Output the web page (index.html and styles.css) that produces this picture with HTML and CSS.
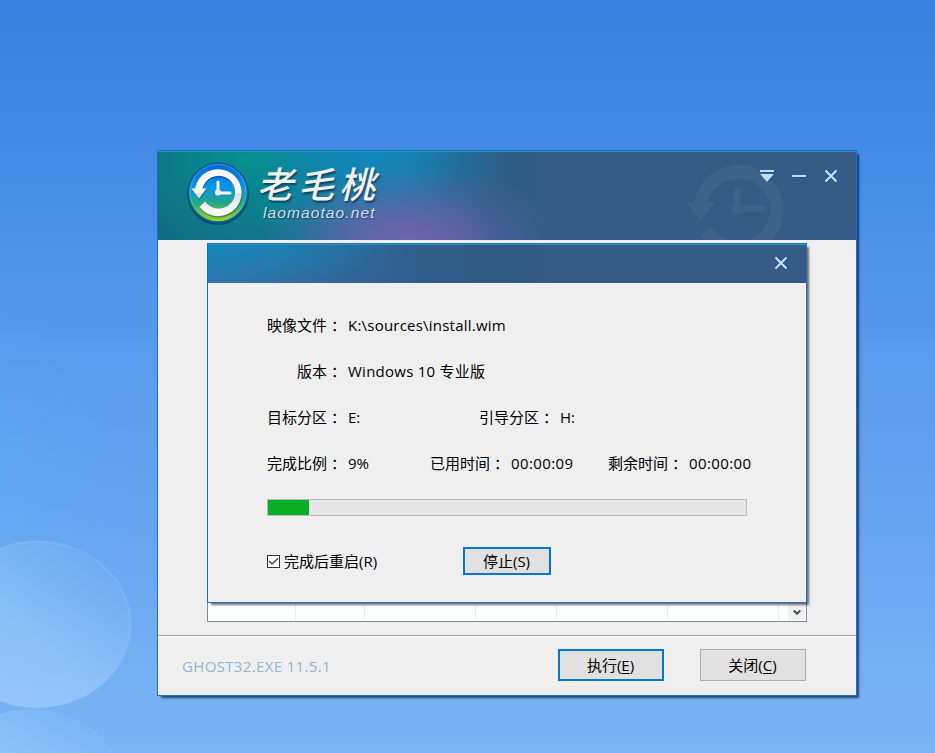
FILE: index.html
```html
<!DOCTYPE html>
<html lang="zh-CN">
<head>
<meta charset="utf-8">
<title>老毛桃</title>
<link rel="stylesheet" href="styles.css">
</head>
<body>
<svg class="bubbles" width="200" height="253" viewBox="0 0 200 253">
  <defs>
    <linearGradient id="bubble" x1="1" y1="0" x2="0" y2="1">
      <stop offset="0.15" stop-color="#bfe3ff" stop-opacity="0.05"/>
      <stop offset="0.55" stop-color="#bfe6ff" stop-opacity="0.34"/>
      <stop offset="1" stop-color="#c5e8ff" stop-opacity="0.38"/>
    </linearGradient>
  </defs>
  <ellipse cx="37" cy="124.500" rx="93.500" ry="83" fill="url(#bubble)" stroke="#a5d2ff" stroke-opacity="0.22" stroke-width="2"/>
  <ellipse cx="30" cy="293" rx="94" ry="83" fill="url(#bubble)" stroke="#a5d2ff" stroke-opacity="0.12" stroke-width="2"/>
</svg>

<main class="window">
  <header class="banner">
    <svg class="emblem" width="68" height="70" viewBox="0 0 68 70">
      <defs>
        <linearGradient id="disc" x1="0" y1="0" x2="0" y2="1">
          <stop offset="0" stop-color="#0563d8"/>
          <stop offset="0.42" stop-color="#0797e8"/>
          <stop offset="0.68" stop-color="#24a884"/>
          <stop offset="1" stop-color="#a5d900"/>
        </linearGradient>
        <linearGradient id="silver" x1="0" y1="0" x2="0" y2="1">
          <stop offset="0" stop-color="#ffffff"/>
          <stop offset="0.5" stop-color="#f8f8f8"/>
          <stop offset="0.51" stop-color="#dedede"/>
          <stop offset="1" stop-color="#ffffff"/>
        </linearGradient>
      </defs>
      <circle cx="34" cy="36" r="31" fill="#07385f" opacity="0.65"/>
      <circle cx="34" cy="34.500" r="29.500" fill="url(#disc)" stroke="#14609a" stroke-width="1.500"/>
      <circle cx="34" cy="34.500" r="28" fill="none" stroke="#8ee7e5" stroke-opacity="0.35"/>
      <path d="M11 30.500 A23.500 23.500 0 1 1 15.500 49 L21 43.500 A16.500 16.500 0 1 0 18.500 30.500 H22.500 L15 40.500 L7.300 30.500 Z" fill="#0a4385" opacity="0.5" transform="translate(0.500 1.500)"/>
      <path d="M11 30.500 A23.500 23.500 0 1 1 15.500 49 L21 43.500 A16.500 16.500 0 1 0 18.500 30.500 H22.500 L15 40.500 L7.300 30.500 Z" fill="url(#silver)"/>
      <path d="M34 24 V33 M35 35 H46" fill="none" stroke="#f4f4f4" stroke-width="3" stroke-linecap="round"/>
      <circle cx="34" cy="34.500" r="3" fill="#eee"/>
    </svg>
    <div class="brand">
      <span class="brand-name">老毛桃</span>
      <span class="brand-site">laomaotao.net</span>
    </div>
    <svg class="watermark" width="98" height="76" viewBox="0 0 98 76">
      <path d="M8 38 A45 45 0 1 1 15 71 L26 63 A31.500 31.500 0 1 0 22 38 H29 L15 56 L0 38 Z" fill="#3f628b"/>
      <path d="M51.500 27 V45 H77" fill="none" stroke="#3f628b" stroke-width="6" stroke-linecap="round"/>
      <circle cx="51.500" cy="45" r="5.500" fill="#3f628b"/>
    </svg>
    <svg class="controls" width="80" height="16" viewBox="0 0 80 16">
      <g fill="#0a4f97" opacity="0.6" transform="translate(1 1)">
        <path d="M1 2H15V4H1Z M1 6H15L8 14Z M33 7H47V9H33Z"/>
        <path d="M67 3L77 13M77 3L67 13" stroke="#0a5fb0" stroke-width="2.200"/>
      </g>
      <path d="M1 2H15V4H1Z M1 6H15L8 14Z M33 7H47V9H33Z" fill="#bfe0ff"/>
      <path d="M66.500 2.500L77.500 13.500M77.500 2.500L66.500 13.500" stroke="#c8e4ff" stroke-width="2"/>
    </svg>
  </header>

  <section class="content">
    <div class="list">
      <div class="cells"><i></i><i></i><i></i><i></i><i></i><i></i></div>
      <div class="scroll">
        <svg width="8" height="7" viewBox="0 0 8 7"><path d="M0.700 1.500L4 4.800L7.300 1.500" fill="none" stroke="#505050" stroke-width="2"/></svg>
      </div>
    </div>
  </section>

  <footer class="footer">
    <span class="version">GHOST32.EXE 11.5.1</span>
    <button class="button primary">执行(<u>E</u>)</button>
    <button class="button">关闭(<u>C</u>)</button>
  </footer>

  <section class="dialog">
    <header class="dialog-bar">
      <svg width="16" height="16" viewBox="0 0 16 16">
        <path d="M3.500 3.500L14.500 14.500M14.500 3.500L3.500 14.500" stroke="#0a5fb0" stroke-width="2" opacity="0.6"/>
        <path d="M2.500 2.500L13.500 13.500M13.500 2.500L2.500 13.500" stroke="#c8e4ff" stroke-width="2"/>
      </svg>
    </header>
    <div class="dialog-body">
      <div class="row">
        <div class="field"><span class="label">映像文件<b>：</b></span><span class="value path">K:\sources\install.wim</span></div>
      </div>
      <div class="row">
        <div class="field"><span class="label">版本<b>：</b></span><span class="value os">Windows 10 专业版</span></div>
      </div>
      <div class="row">
        <div class="field target"><span class="label">目标分区<b>：</b></span><span class="value">E:</span></div>
        <div class="field"><span class="label">引导分区<b>：</b></span><span class="value">H:</span></div>
      </div>
      <div class="row">
        <div class="field percent"><span class="label">完成比例<b>：</b></span><span class="value">9%</span></div>
        <div class="field elapsed"><span class="label">已用时间<b>：</b></span><span class="value time">00:00:09</span></div>
        <div class="field"><span class="label">剩余时间<b>：</b></span><span class="value time">00:00:00</span></div>
      </div>
      <div class="progress"><div class="progress-fill"></div></div>
      <div class="actions">
        <label class="check">
          <svg width="13" height="13" viewBox="0 0 13 13"><rect x="0.500" y="0.500" width="12" height="12" fill="#fff" stroke="#333"/><path d="M2 6L5 9L11 3.200" fill="none" stroke="#444" stroke-width="1.300"/></svg>
          <span>完成后重启(R)</span>
        </label>
        <button class="button primary stop">停止(S)</button>
      </div>
    </div>
  </section>
</main>
</body>
</html>
```

FILE: styles.css
```css
* { box-sizing: border-box; }

body {
  margin: 0;
  width: 935px;
  height: 753px;
  overflow: hidden;
  position: relative;
  background:
    radial-gradient(circle at -40px 480px, rgba(90, 180, 245, 0.4), rgba(90, 180, 245, 0) 180px),
    linear-gradient(#3a80e0 0, #468ee8 190px, #589aeb 350px, #6ba7f0 560px, #7cb5f6 753px);
  font: 15px/20px "Open Sans", "Noto Sans CJK SC", sans-serif;
  color: #000;
}

.bubbles { position: absolute; left: 0; top: 500px; }

.window {
  position: absolute;
  left: 157px;
  top: 150px;
  width: 700px;
  height: 546px;
  display: flex;
  flex-direction: column;
  background: #efefef;
  border: 1px solid #1670cd;
  box-shadow: 3px 3px 2px -1px rgba(0, 15, 40, 0.65);
}

.banner {
  height: 89px;
  flex: none;
  position: relative;
  display: flex;
  border-top: 1px solid #2b93a3;
  background:
    radial-gradient(ellipse 150px 80px at 250px 92px, #7363a9 0, rgba(112, 98, 168, 0.8) 30%, rgba(105, 98, 165, 0.3) 70%, rgba(100, 98, 160, 0) 100%),
    radial-gradient(ellipse 130px 120px at 216px 0, #1187ba 0, rgba(17, 135, 186, 0.75) 35%, rgba(17, 135, 186, 0.2) 75%, rgba(17, 135, 186, 0) 100%),
    radial-gradient(ellipse 150px 90px at 88px 8px, #068f8f, rgba(6, 143, 143, 0)),
    linear-gradient(90deg, #116982 0, #137590 130px, #2a638d 290px, #2d5c87 350px, #345a85 400px);
}

.emblem { margin: 6px 0 0 26px; }

.brand {
  display: flex;
  flex-direction: column;
  margin: 13px 0 0 5px;
}

.brand-name {
  font-family: "Noto Sans CJK SC", sans-serif;
  font-size: 36px;
  font-style: italic;
  font-weight: 500;
  line-height: 34px;
  letter-spacing: 5px;
  color: #f1f1f1;
  text-shadow: 1px 2px 2px rgba(0, 35, 60, 0.65);
}

.brand-site {
  margin: 6px 0 0 6px;
  font-family: "Liberation Sans", sans-serif;
  font-size: 15.5px;
  font-style: italic;
  line-height: 16px;
  letter-spacing: 1.1px;
  color: #cfdff0;
  text-shadow: 1px 1px 1px rgba(0, 35, 60, 0.5);
}

.watermark { position: absolute; left: 528px; top: 12px; }
.controls { position: absolute; left: 601px; top: 16px; }

.content { flex: 1; padding: 0 49px; display: flex; align-items: flex-end; }

.list {
  flex: 1;
  height: 370px;
  margin-bottom: 13px;
  display: flex;
  justify-content: space-between;
  background: #fff;
  border: 1px solid #828790;
}

.cells { display: grid; grid-template-columns: 88px 69px 111px 81px 111px 111px; height: 367px; }
.cells i { border-right: 1px solid #ececf0; }

.scroll {
  width: 17px;
  margin: 1px 1px 1px 0;
  display: flex;
  align-items: flex-end;
  justify-content: center;
  padding-bottom: 4px;
  background: #f0f0f0;
}

.footer {
  height: 60px;
  flex: none;
  display: flex;
  align-items: flex-start;
  padding: 12px 50px 0 24px;
  border-top: 1px solid #a0a0a0;
  box-shadow: inset 0 1px #fff;
}

.version { flex: 1; margin-top: 8px; color: #94b4d3; letter-spacing: 0.35px; }

.button {
  width: 106px;
  height: 32px;
  margin: 1px 0 0 36px;
  padding: 0 1px 1px 0;
  background: #e1e1e1;
  border: 1px solid #adadad;
  font: inherit;
  color: inherit;
}

.button.primary { border: 2px solid #0078d7; }
.button u { text-underline-offset: 2px; text-decoration-thickness: 1px; }

.dialog {
  position: absolute;
  left: 49px;
  top: 92px;
  width: 600px;
  height: 360px;
  display: flex;
  flex-direction: column;
  background: #efefef;
  border: 1px solid #1670cd;
  box-shadow: 3px 3px 2px -1px rgba(0, 0, 0, 0.55);
}

.dialog-bar {
  height: 39px;
  flex: none;
  display: flex;
  justify-content: flex-end;
  padding: 10px 17px 0 0;
  border-top: 1px solid #2b93b3;
  background:
    radial-gradient(ellipse 200px 50px at 0 0, #1187ba, rgba(17, 135, 186, 0)),
    linear-gradient(90deg, #3970a8 0, #35689c 100px, #2f5f8c 200px, #2f5a86 280px, #345a85 340px);
}

.dialog-body { padding: 19px 59px 0; }
.row { display: flex; height: 46px; align-items: center; }
.field { display: flex; flex: none; gap: 6px; white-space: nowrap; }
.target { width: 212px; }
.percent { width: 163px; }
.elapsed { width: 178px; }
.label { width: 75px; text-align: right; }
.label b { display: inline-block; width: 15px; text-indent: 4px; text-align: left; font-weight: 400; }
.path { letter-spacing: 0.22px; }
.os { letter-spacing: 0.25px; }
.time { letter-spacing: 0.4px; }

.progress {
  height: 17px;
  margin-top: 13px;
  background: #e6e6e6;
  border: 1px solid #bcbcbc;
}

.progress-fill { width: 41px; height: 100%; background: #06b025; }

.actions { display: flex; align-items: center; margin-top: 31px; }
.check { display: flex; align-items: center; gap: 4px; width: 196px; white-space: nowrap; }
.stop { width: 88px; height: 28px; margin: 0; }
```
